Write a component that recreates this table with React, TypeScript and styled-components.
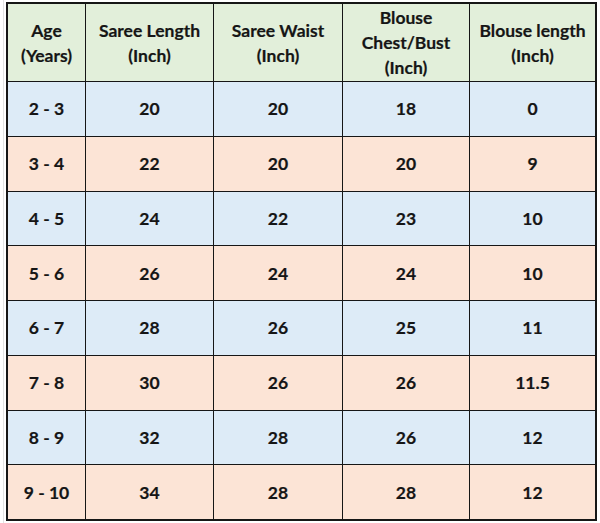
import { createGlobalStyle, styled } from "styled-components";

const GlobalStyle = createGlobalStyle`
  html, body {
    margin: 0;
    padding: 0;
    background: #ffffff;
  }
`;

const Sheet = styled.div`
  margin-left: 3px;
  border-left: 1px solid #e2e2e2;
  padding: 2px 0 0 2px;
  width: 594px;
  height: 521px;
  font-family: Lato, "Open Sans", "Liberation Sans", sans-serif;
`;

const Grid = styled.div`
  display: grid;
  grid-template-columns: 77px 127px 128px 126px 125px;
  grid-template-rows: 77px repeat(8, 1fr);
  gap: 1px;
  width: 591px;
  height: 519px;
  box-sizing: border-box;
  border: 2px solid #161616;
  background: #161616;
`;

const tones = {
  head: "#e2efda",
  blue: "#ddebf7",
  peach: "#fce4d6",
};

const Cell = styled.div<{ $tone: keyof typeof tones }>`
  display: flex;
  align-items: center;
  justify-content: center;
  text-align: center;
  background: ${({ $tone }) => tones[$tone]};
  color: #151515;
  font-weight: 700;
  font-size: 17.5px;
  line-height: 25px;
  -webkit-text-stroke: 0.2px #151515;
`;

const headers = [
  ["Age", "(Years)"],
  ["Saree Length", "(Inch)"],
  ["Saree Waist", "(Inch)"],
  ["Blouse", "Chest/Bust", "(Inch)"],
  ["Blouse length", "(Inch)"],
];

const rows = [
  ["2 - 3", "20", "20", "18", "0"],
  ["3 - 4", "22", "20", "20", "9"],
  ["4 - 5", "24", "22", "23", "10"],
  ["5 - 6", "26", "24", "24", "10"],
  ["6 - 7", "28", "26", "25", "11"],
  ["7 - 8", "30", "26", "26", "11.5"],
  ["8 - 9", "32", "28", "26", "12"],
  ["9 - 10", "34", "28", "28", "12"],
];

export default function App() {
  return (
    <>
      <GlobalStyle />
      <Sheet>
        <Grid>
          {headers.map((lines, i) => (
            <Cell key={"h" + i} $tone="head">
              <div>
                {lines.map((l, j) => (
                  <div key={j}>{l}</div>
                ))}
              </div>
            </Cell>
          ))}
          {rows.map((row, r) =>
            row.map((v, c) => (
              <Cell key={r + "-" + c} $tone={r % 2 === 0 ? "blue" : "peach"}>
                {v}
              </Cell>
            ))
          )}
        </Grid>
      </Sheet>
    </>
  );
}
